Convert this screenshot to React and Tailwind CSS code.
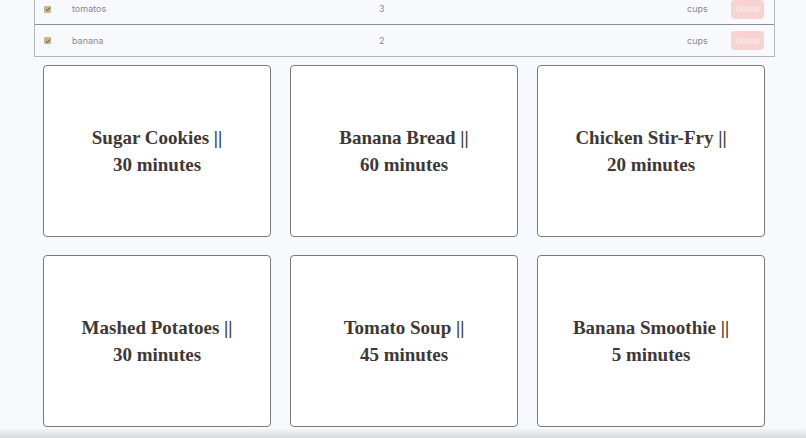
import React from "react";

const rows = [
  { name: "tomatos", qty: "3", unit: "cups" },
  { name: "banana", qty: "2", unit: "cups" },
];

const recipes = [
  ["Sugar Cookies ||", "30 minutes"],
  ["Banana Bread ||", "60 minutes"],
  ["Chicken Stir-Fry ||", "20 minutes"],
  ["Mashed Potatoes ||", "30 minutes"],
  ["Tomato Soup ||", "45 minutes"],
  ["Banana Smoothie ||", "5 minutes"],
];

function Check() {
  return (
    <span className="flex h-[7px] w-[7px] items-center justify-center rounded-[1px] bg-[#c9b58e]">
      <svg width="6" height="6" viewBox="0 0 6 6">
        <path d="M1 3.2 L2.4 4.5 L5 1.5" fill="none" stroke="#5a4a30" strokeWidth="1" />
      </svg>
    </span>
  );
}

export default function App() {
  return (
    <div className="relative flex h-[438px] w-full flex-col overflow-hidden bg-[#f8f9fc]">
      <div className="mx-[34px] mt-[-6px] w-[741px] border-x border-b border-[#b5b5b8]" style={{ fontFamily: "Inter, 'Open Sans', sans-serif" }}>
        {rows.map((r, i) => (
          <div
            key={r.name}
            className={`flex h-[31px] items-center text-[9px] text-[#8a8a8e] ${i === 0 ? "border-b border-[#8e8e92]" : ""}`}
          >
            <div className="ml-[9px] w-[28px]"><Check /></div>
            <div className="w-[307px]">{r.name}</div>
            <div className="w-[308px]">{r.qty}</div>
            <div className="w-[44px]">{r.unit}</div>
            <div className="flex h-[19px] w-[33px] items-center justify-center rounded-[4px] bg-[#f8d3d3] text-[8px] text-[#fdeeee]">
              Delete
            </div>
          </div>
        ))}
      </div>
      <div className="ml-[43px] mt-[8px] grid w-[722px] grid-cols-3 gap-x-[19px] gap-y-[18px]">
        {recipes.map(([a, b]) => (
          <div
            key={a}
            className="flex h-[172px] flex-col items-center justify-center rounded-[4px] border border-[#7a7a7c] bg-white text-center text-[19px] font-bold leading-[27px] text-[#3d3836]"
            style={{ fontFamily: "'Liberation Serif', 'DejaVu Serif', serif" }}
          >
            <div>{a}</div>
            <div>{b}</div>
          </div>
        ))}
      </div>
      <div className="mt-auto h-[9px] w-full bg-gradient-to-b from-[#f3f4f7] to-[#d9dadd]" />
    </div>
  );
}
